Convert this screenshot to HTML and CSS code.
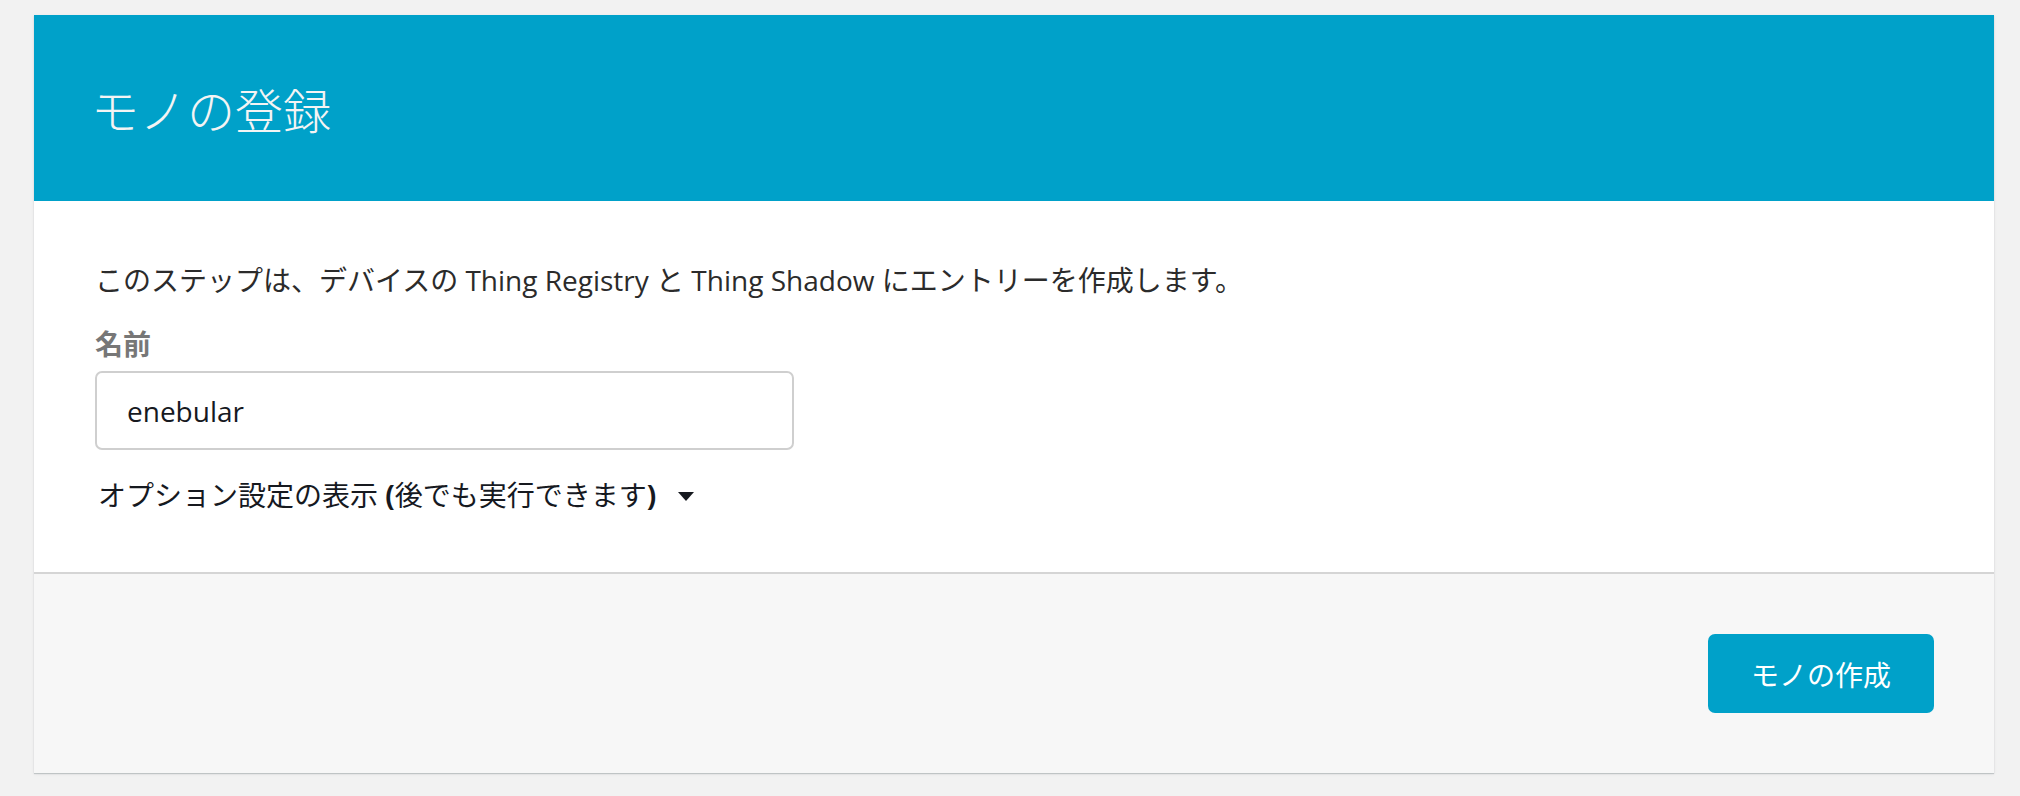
FILE: index.html
```html
<!DOCTYPE html>
<html lang="ja">
<head>
<meta charset="utf-8">
<title>モノの登録</title>
<link rel="stylesheet" href="styles.css">
</head>
<body>
<div class="card">
  <header class="card-header">
    <h1 class="title">モノの登録</h1>
  </header>
  <section class="card-body">
    <p class="desc">このステップは、デバイスの Thing Registry と Thing Shadow にエントリーを作成します。</p>
    <label class="label" for="name">名前</label>
    <input class="input" id="name" type="text" value="enebular">
    <div class="options">
      <span>オプション設定の表示 <span class="paren">(</span>後でも実行できます<span class="paren">)</span></span>
      <span class="caret"></span>
    </div>
  </section>
  <footer class="card-footer">
    <button class="btn" type="button">モノの作成</button>
  </footer>
</div>
</body>
</html>
```
FILE: styles.css
```css
* { box-sizing: border-box; }
html, body { height: 100%; }
body {
  margin: 0;
  padding: 15px 26px 0 34px;
  background: #f2f2f2;
  font-family: "Open Sans", "Noto Sans CJK JP", sans-serif;
  font-size: 28px;
  color: #16191f;
}
.card {
  background: #fff;
  box-shadow: 0 1px 1px 0 rgba(0, 28, 36, 0.18), 0 1px 4px 0 rgba(0, 0, 0, 0.06);
}
.card-header {
  background: #00a1c9;
  height: 186px;
  display: flex;
  align-items: center;
  padding: 0 57px;
}
.title {
  margin: 0;
  font-size: 48px;
  font-weight: 300;
  color: #f4f4f4;
  line-height: 60px;
  font-family: "Noto Sans CJK JP", sans-serif;
}
.card-body {
  padding: 59px 61px 57px;
  display: flex;
  flex-direction: column;
  align-items: flex-start;
  border-bottom: 2px solid #d5d5d5;
}
.desc {
  margin: 0;
  line-height: 40px;
  color: #2b2b2b;
}
.label {
  margin-top: 24px;
  line-height: 40px;
  font-weight: 700;
  color: #777;
}
.input {
  margin-top: 7px;
  width: 699px;
  height: 79px;
  border: 2px solid #cfcfcf;
  border-radius: 7px;
  padding: 0 30px;
  font-family: inherit;
  font-size: 28px;
  color: #16191f;
  background: #fff;
  outline: none;
}
.options {
  margin-top: 25px;
  line-height: 40px;
  display: flex;
  align-items: center;
  gap: 22px;
  padding-left: 3px;
  color: #16191f;
}
.paren {
  font-weight: 700;
}
.caret {
  width: 0;
  height: 0;
  border-left: 8px solid transparent;
  border-right: 8px solid transparent;
  border-top: 9px solid #16191f;
  margin-top: 2px;
}
.card-footer {
  background: #f7f7f7;
  display: flex;
  justify-content: flex-end;
  padding: 60px 60px 60px;
}
.btn {
  width: 226px;
  height: 79px;
  border: none;
  border-radius: 7px;
  background: #00a1c9;
  color: #fff;
  font-family: "Noto Sans CJK JP", sans-serif;
  font-size: 28px;
  cursor: pointer;
}
```
